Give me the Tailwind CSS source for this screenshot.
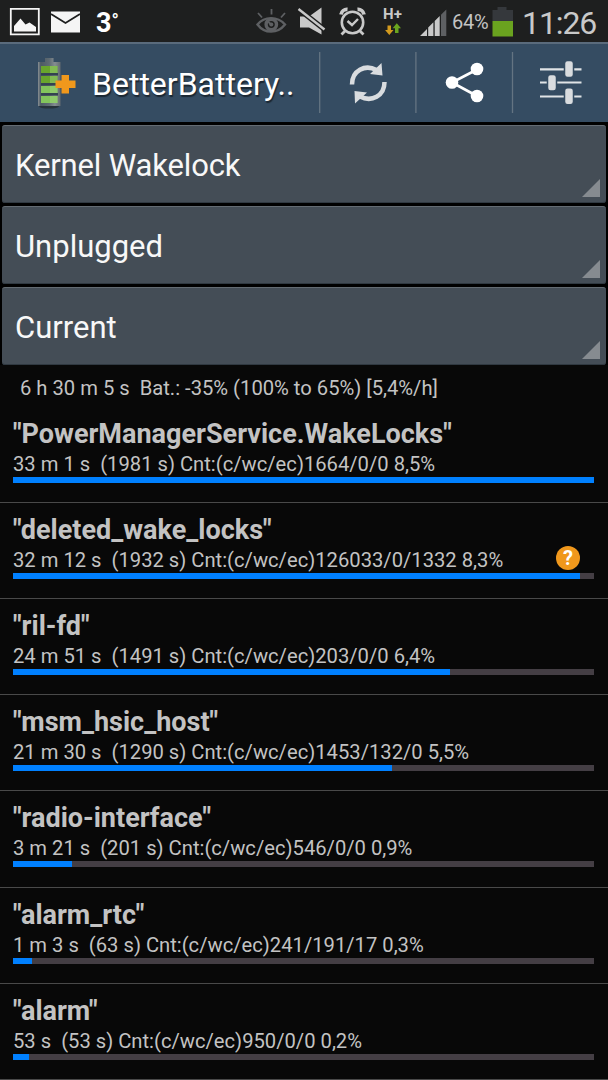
<!DOCTYPE html>
<html lang="en">
<head>
<meta charset="utf-8">
<title>BetterBatteryStats</title>
<script src="https://cdn.jsdelivr.net/npm/@tailwindcss/browser@4"></script>
</head>
<body class="bg-black">
<div class="w-[608px] h-[1080px] overflow-hidden bg-[#080808] font-['Roboto',sans-serif] text-[#c3c3c3] flex flex-col">
  <div class="h-[42px] shrink-0 bg-[#1e1f1f] flex">
    <svg class="w-[96px] h-[42px] shrink-0" viewBox="0 0 96 42" fill="none">
      <path d="M10.8 8.8h28v25.600h-28z" stroke="#f5f5f5" stroke-width="1.8"/>
      <path d="M14 31.500V26l6.500-7.500 5 6 4-2 6.500 4.500v4.500z" fill="#f5f5f5"/>
      <path d="M51 11.500h29v21H51z" fill="#f5f5f5"/>
      <path d="M51 14l14.500 9L80 14" stroke="#1e1f1f" stroke-width="1.800"/>
    </svg>
    <div class="w-[154px] flex items-start pt-[5px] text-white font-bold"><span class="text-[27px] leading-[36px]">3</span><span class="text-[19px] leading-[32px]">°</span></div>
    <svg class="w-[200px] h-[42px] shrink-0" viewBox="250 0 200 42" fill="none">
      <g stroke="#5e6063" stroke-width="1.800">
        <path d="M257.500 24.500c7-8.500 20-8.500 27.500 0-7.500 9.500-20.500 9.500-27.500 0z" stroke-width="2.400"/>
        <circle cx="271.300" cy="24.500" r="5.200" stroke-width="3.400"/>
        <path d="M271.500 9v5.500M258 13l4 4.500M285 13l-4 4.500M271 24.500l-4-4"/>
      </g>
      <circle cx="271.300" cy="24.500" r="2" fill="#5e6063"/>
      <path d="M300 16.500h9L321.500 7.500v27L309 27.500h-9z" fill="#c9c9c9"/>
      <path d="M298.500 9l26 20.500" stroke="#1e1f1f" stroke-width="5.400"/>
      <path d="M298.500 9l26 20.500" stroke="#c9c9c9" stroke-width="2.400"/>
      <g stroke="#c9c9c9">
        <circle cx="352.500" cy="22.500" r="10.700" stroke-width="2.600"/>
        <path d="M347.500 21l4.500 4 6-6" stroke-width="2.400"/>
        <path d="M341 14.500a6 6 0 0 1 6.500-5M357.500 9.500a6 6 0 0 1 6.500 5" stroke-width="3.800"/>
        <path d="M345.500 30.500l-4 4M359.500 30.500l4 4" stroke-width="2.800"/>
      </g>
      <text x="383" y="19" font-size="15" font-weight="700" fill="#c9c9c9" textLength="19">H+</text>
      <path d="M387.500 25.500h3.500V30h2.500l-4.200 5-4.200-5h2.400z" fill="#d39a1e"/>
      <path d="M395 33h3.500v-4.800h2.500l-4.200-5-4.200 5h2.400z" fill="#6aa51f"/>
      <path d="M420 36l7-7v7zM428.200 27.500l5.200-5.300V36h-5.200zM434.700 21l5-5v20h-5z" fill="#c9c9c9"/>
      <path d="M441 14.800l5.300-5.300V36H441z" fill="#5e6063"/>
    </svg>
    <div class="w-[41px] pl-[2px] shrink-0 text-[20px] leading-[45px] tracking-[-0.2px] text-[#c3c3c3]">64%</div>
    <svg class="w-[24px] h-[42px] shrink-0" viewBox="491 0 24 42"><path d="M492.500 10h5V7h9v3h6.500v11h-20.500z" fill="#35383c"/><path d="M492.500 21H513v15.500h-20.500z" fill="#6aa31f"/></svg>
    <div class="pl-[7px] text-[32px] leading-[46px] tracking-[-1.100px] text-[#c9c9c9]">11:26</div>
  </div>
  <div class="h-[80px] shrink-0 bg-[#354c62] border-t-2 border-[#5a6b7c] flex">
    <svg class="w-[92px] h-[78px] shrink-0" viewBox="0 44 92 78">
      <defs><linearGradient id="m"><stop offset="0" stop-color="#8a9194"/><stop offset=".12" stop-color="#4c5963"/><stop offset=".5" stop-color="#5f6b73"/><stop offset=".75" stop-color="#858d91"/><stop offset="1" stop-color="#626a70"/></linearGradient></defs>
      <ellipse cx="49" cy="106.500" rx="10" ry="2" fill="#27323b"/>
      <path d="M45 58h8.500v5H45zM38 62h22.500v44H38z" fill="url(#m)"/>
      <path d="M41 73h17v2.500H41zM41 83h17v2.500H41zM41 93h17v2.500H41z" fill="#34434f"/>
      <path d="M41 66h16.500v7H41zM41 76h16.500v7H41z" fill="#69a52c"/><path d="M41 86h16.500v7H41zM41 96h16.500v7H41z" fill="#83c45c"/>
      <path d="M50 66h7.500v7H50zM50 76h7.500v7H50zM50 86h7.500v7H50zM50 96h7.500v7H50z" fill="#9bcf79" opacity=".5"/>
      <path d="M61.500 75h7.500v5.500h6.500v7.500H69v5.500h-7.500V88h-6v-7.500h6z" fill="#f0981c"/>
    </svg>
    <div class="w-[227px] shrink-0 text-[32px] leading-[80px] text-white [text-shadow:1px_2px_1px_#1b2732]">BetterBattery..</div>
    <svg class="w-[289px] h-[78px] shrink-0" viewBox="319 44 289 78" fill="none">
      <path d="M319.700 52v61M415.900 52v61M512.500 52v61" stroke="#647482" stroke-width="1.300"/>
      <g stroke="#d9dcdf" stroke-width="4.500"><path d="M352 84.500c0-14 13-20.500 24.500-14.500"/><path d="M384.500 82c0 14-13 20.500-24.500 14.500"/></g>
      <path d="M381.500 63l1 12.500-12.500-1.500zM355 103.500L354.500 91l12.500 1.500z" fill="#d9dcdf"/>
      <path d="M477 69.500l-25 13 25 13.500" stroke="#fff" stroke-width="2.700"/>
      <g fill="#fff"><circle cx="477" cy="69" r="6.300"/><circle cx="452" cy="82.500" r="6.300"/><circle cx="477" cy="96" r="6.300"/></g>
      <path d="M540 69.300h41.500M540 82.500h41.500M540 96.500h41.500" stroke="#e0e3e6" stroke-width="2.200"/>
      <g fill="#d9dcdf" stroke="#354c62" stroke-width="1.500"><rect x="564.500" y="60.500" width="9" height="17" rx="3"/><rect x="547.500" y="74.500" width="9" height="16.500" rx="3"/><rect x="564.500" y="87.700" width="9" height="17" rx="3"/></g>
    </svg>
  </div>
  <div class="flex flex-col gap-[3px] px-[2px] pt-[3px] bg-black shrink-0 text-[31px] leading-[75px] text-[#f8f8f8]">
    <div class="h-[78px] rounded-[3px] bg-[#444d56] border-t border-[#646c73] pl-[13px] pr-[6px] flex justify-between items-end shadow-[inset_0_-1px_#303941]"><span class="tracking-[-0.150px]">Kernel Wakelock</span><svg class="w-[18px] h-[18px] mb-[6px]"><path d="M18 0v18H0z" fill="#868b90"/></svg></div>
    <div class="h-[78px] rounded-[3px] bg-[#444d56] border-t border-[#646c73] pl-[13px] pr-[6px] flex justify-between items-end shadow-[inset_0_-1px_#303941]"><span>Unplugged</span><svg class="w-[18px] h-[18px] mb-[6px]"><path d="M18 0v18H0z" fill="#868b90"/></svg></div>
    <div class="h-[78px] rounded-[3px] bg-[#444d56] border-t border-[#646c73] pl-[13px] pr-[6px] flex justify-between items-end shadow-[inset_0_-1px_#303941]"><span>Current</span><svg class="w-[18px] h-[18px] mb-[6px]"><path d="M18 0v18H0z" fill="#868b90"/></svg></div>
  </div>
  <div class="h-[42px] shrink-0 pl-[20px] text-[20.200px] leading-[46px] whitespace-pre">6 h 30 m 5 s  Bat.: -35% (100% to 65%) [5,4%/h]</div>
  <div id="rows" class="shrink-0"></div>
</div>
<script>
const data = [
  ['PowerManagerService.WakeLocks', '33 m 1 s  (1981 s) Cnt:(c/wc/ec)1664/0/0 8,5%', 581],
  ['deleted_wake_locks', '32 m 12 s  (1932 s) Cnt:(c/wc/ec)126033/0/1332 8,3%', 567],
  ['ril-fd', '24 m 51 s  (1491 s) Cnt:(c/wc/ec)203/0/0 6,4%', 437],
  ['msm_hsic_host', '21 m 30 s  (1290 s) Cnt:(c/wc/ec)1453/132/0 5,5%', 379],
  ['radio-interface', '3 m 21 s  (201 s) Cnt:(c/wc/ec)546/0/0 0,9%', 59],
  ['alarm_rtc', '1 m 3 s  (63 s) Cnt:(c/wc/ec)241/191/17 0,3%', 19],
  ['alarm', '53 s  (53 s) Cnt:(c/wc/ec)950/0/0 0,2%', 16]
];
document.getElementById('rows').innerHTML = data.map(([name, detail, w], i) => `
  <div class="relative h-[96.120px] pt-[8px] px-[13px] border-b border-[#494949]">
    <div class="h-[34px] text-[27px] leading-[38px] font-bold">"${name}"</div>
    <div class="h-[28px] text-[20.200px] leading-[31px] whitespace-pre">${detail}</div>
    <div class="h-[6px] w-[581px] bg-[#443e44]"><div class="h-full bg-[#0080ff]" style="width:${w}px"></div></div>
    ${i === 1 ? '<div class="absolute left-[556px] top-[43px] size-[24px] rounded-full bg-[#f0981c] text-white font-bold text-[20px] leading-[24px] text-center">?</div>' : ''}
  </div>`).join('');
</script>
</body>
</html>
